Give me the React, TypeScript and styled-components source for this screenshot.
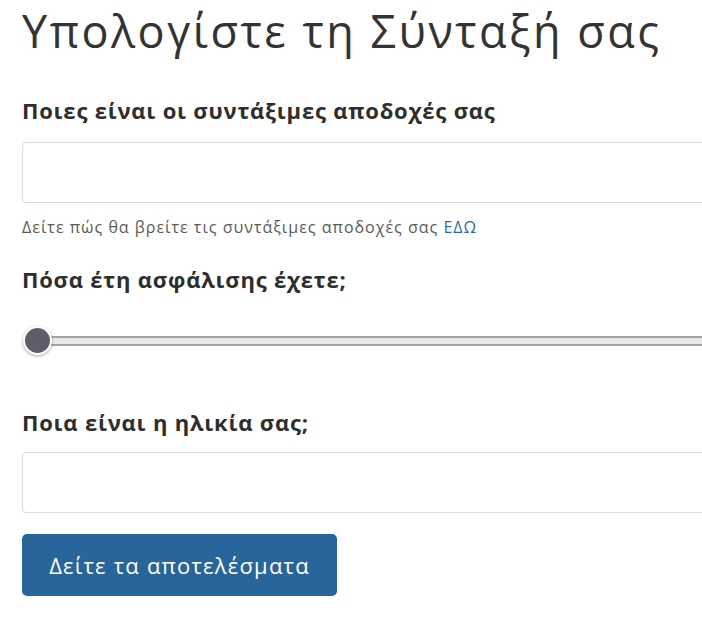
import React from "react";
import styled, { createGlobalStyle } from "styled-components";

const Global = createGlobalStyle`
  html, body { margin: 0; padding: 0; background: #fff; overflow: hidden; }
  body { font-family: "Open Sans", "Noto Sans", sans-serif; color: #333; }
`;

const Page = styled.div`
  width: 702px;
  height: 623px;
  overflow: hidden;
  padding: 0 0 0 22px;
  box-sizing: border-box;
`;

const Title = styled.h1`
  margin: 0;
  font-size: 45px;
  font-weight: 500;
  line-height: 62px;
  letter-spacing: 2.5px;
  color: #333;
  white-space: nowrap;
`;

const Field = styled.div<{ $mt: number }>`
  margin-top: ${(p) => p.$mt}px;
  display: flex;
  flex-direction: column;
`;

const Label = styled.label`
  font-size: 22px;
  font-weight: 700;
  line-height: 28px;
  letter-spacing: 0.8px;
  color: #2e2e2e;
  white-space: nowrap;
`;

const Input = styled.input<{ $mt: number }>`
  box-sizing: border-box;
  width: 720px;
  height: 61px;
  margin-top: ${(p) => p.$mt}px;
  border: 1px solid #dadada;
  border-radius: 4px;
  background: #fff;
  font-size: 18px;
  font-family: inherit;
  padding: 0 12px;
  outline: none;
`;

const Help = styled.p`
  margin: 13px 0 0;
  font-size: 16px;
  line-height: 22px;
  letter-spacing: 1px;
  color: #5a5a5a;
  white-space: nowrap;
`;

const Link = styled.a`
  color: #2a6cb0;
  text-decoration: none;
`;

const SliderRow = styled.div`
  position: relative;
  margin-top: 33px;
  height: 29px;
  display: flex;
  align-items: center;
`;

const Track = styled.div`
  width: 720px;
  height: 6px;
  background: #e8e8e8;
  border-top: 2px solid #a3a3a3;
  border-bottom: 2px solid #a3a3a3;
  margin-left: 14px;
`;

const Thumb = styled.div`
  position: absolute;
  left: 1px;
  top: 0;
  width: 25px;
  height: 25px;
  border-radius: 50%;
  background: #5e5e6a;
  border: 2px solid #fff;
  box-shadow: 0 1px 3px rgba(0, 0, 0, 0.35);
`;

const Button = styled.button`
  margin-top: 21px;
  width: 315px;
  height: 62px;
  background: #27659b;
  color: #fff;
  border: none;
  border-radius: 5px;
  font-family: "Open Sans", "Noto Sans", sans-serif;
  font-size: 22px;
  letter-spacing: 1.2px;
  font-weight: 400;
  cursor: pointer;
`;

export default function App() {
  return (
    <>
      <Global />
      <Page>
        <Title>Υπολογίστε τη Σύνταξή σας</Title>
        <Field $mt={34}>
          <Label>Ποιες είναι οι συντάξιμες αποδοχές σας</Label>
          <Input type="text" $mt={18} />
          <Help>
            Δείτε πώς θα βρείτε τις συντάξιμες αποδοχές σας <Link href="#">ΕΔΩ</Link>
          </Help>
        </Field>
        <Field $mt={27}>
          <Label>Πόσα έτη ασφάλισης έχετε;</Label>
          <SliderRow>
            <Track />
            <Thumb />
          </SliderRow>
        </Field>
        <Field $mt={53}>
          <Label>Ποια είναι η ηλικία σας;</Label>
          <Input type="text" $mt={16} />
        </Field>
        <Button>Δείτε τα αποτελέσματα</Button>
      </Page>
    </>
  );
}
